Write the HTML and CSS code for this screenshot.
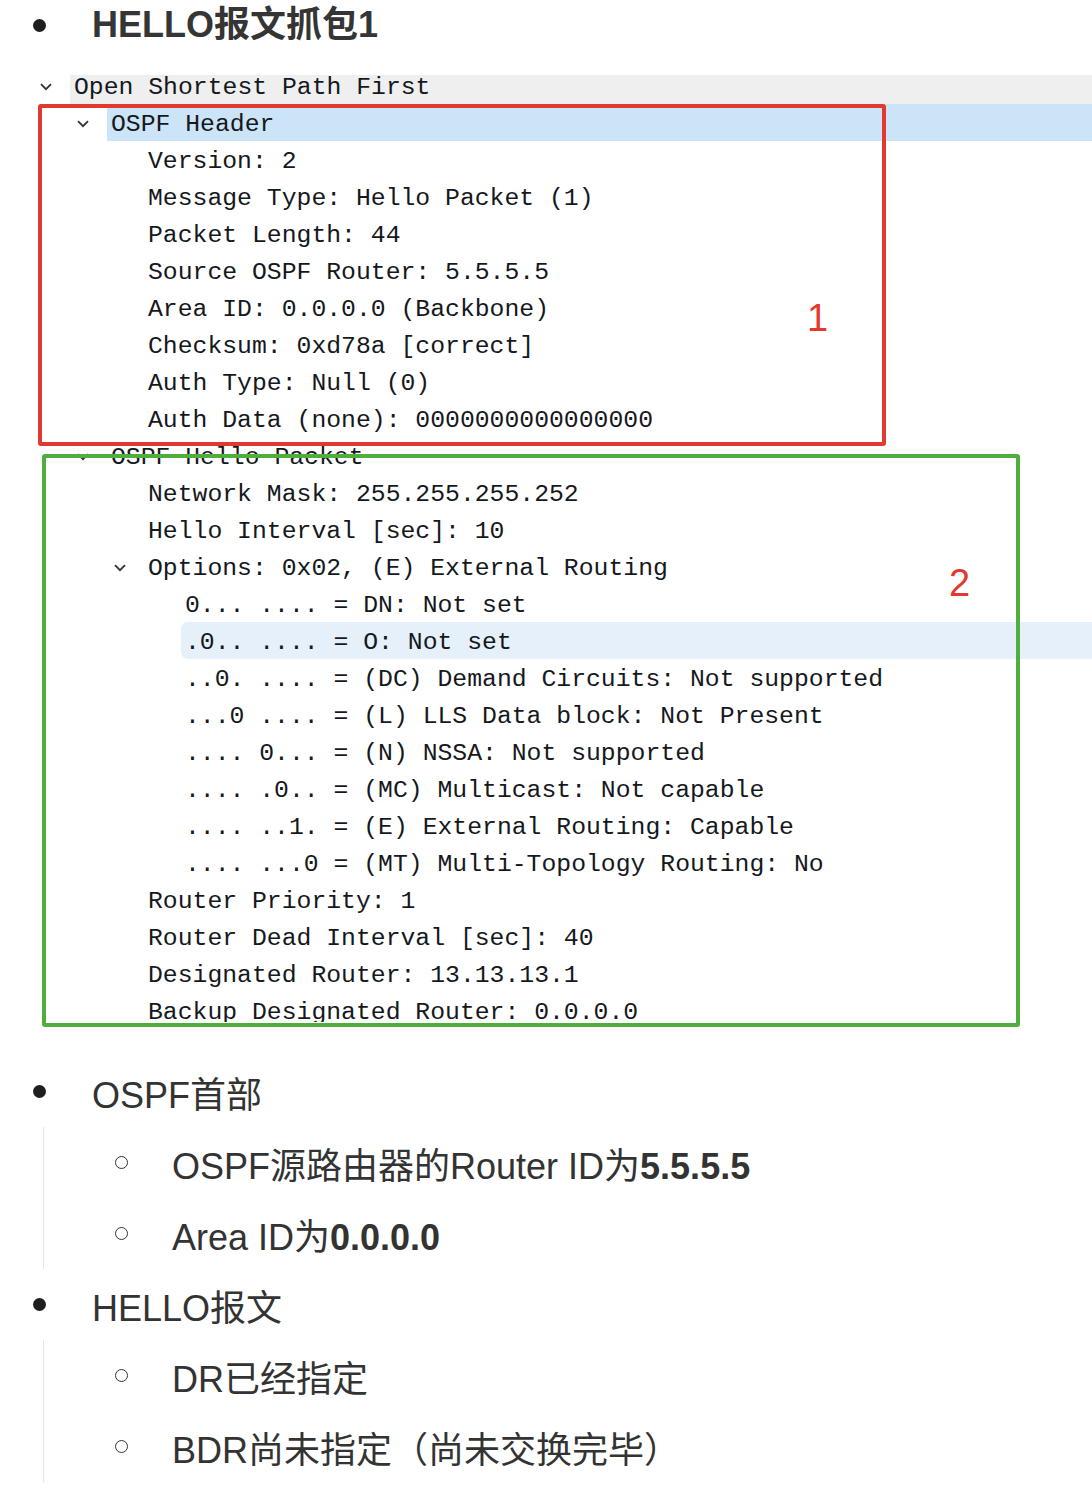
FILE: index.html
```html
<!DOCTYPE html>
<html lang="zh-CN">
<head>
<meta charset="utf-8">
<title>HELLO报文抓包1</title>
<link rel="stylesheet" href="styles.css">
</head>
<body>
<div class="h1row"><span class="dot"></span><span class="h1text">HELLO报文抓包1</span></div>

<div class="capture">
  <div class="panel">
    <div class="row l0 first"><span class="tg"><svg width="12" height="8" viewBox="0 0 12 8"><path d="M1 1.2 L6 6.2 L11 1.2" fill="none" stroke="#333" stroke-width="1.8"/></svg></span><span class="label grey">Open Shortest Path First</span></div>
    <div class="row l1"><span class="tg"><svg width="12" height="8" viewBox="0 0 12 8"><path d="M1 1.2 L6 6.2 L11 1.2" fill="none" stroke="#333" stroke-width="1.8"/></svg></span><span class="label blue">OSPF Header</span></div>
    <div class="row l2"><span class="tg"></span><span class="label">Version: 2</span></div>
    <div class="row l2"><span class="tg"></span><span class="label">Message Type: Hello Packet (1)</span></div>
    <div class="row l2"><span class="tg"></span><span class="label">Packet Length: 44</span></div>
    <div class="row l2"><span class="tg"></span><span class="label">Source OSPF Router: 5.5.5.5</span></div>
    <div class="row l2"><span class="tg"></span><span class="label">Area ID: 0.0.0.0 (Backbone)</span></div>
    <div class="row l2"><span class="tg"></span><span class="label">Checksum: 0xd78a [correct]</span></div>
    <div class="row l2"><span class="tg"></span><span class="label">Auth Type: Null (0)</span></div>
    <div class="row l2"><span class="tg"></span><span class="label">Auth Data (none): 0000000000000000</span></div>
    <div class="row l1"><span class="tg"><svg width="12" height="8" viewBox="0 0 12 8"><path d="M1 1.2 L6 6.2 L11 1.2" fill="none" stroke="#333" stroke-width="1.8"/></svg></span><span class="label">OSPF Hello Packet</span></div>
    <div class="row l2"><span class="tg"></span><span class="label">Network Mask: 255.255.255.252</span></div>
    <div class="row l2"><span class="tg"></span><span class="label">Hello Interval [sec]: 10</span></div>
    <div class="row l2"><span class="tg"><svg width="12" height="8" viewBox="0 0 12 8"><path d="M1 1.2 L6 6.2 L11 1.2" fill="none" stroke="#333" stroke-width="1.8"/></svg></span><span class="label">Options: 0x02, (E) External Routing</span></div>
    <div class="row l3"><span class="tg"></span><span class="label">0... .... = DN: Not set</span></div>
    <div class="row l3"><span class="tg"></span><span class="label sel">.0.. .... = O: Not set</span></div>
    <div class="row l3"><span class="tg"></span><span class="label">..0. .... = (DC) Demand Circuits: Not supported</span></div>
    <div class="row l3"><span class="tg"></span><span class="label">...0 .... = (L) LLS Data block: Not Present</span></div>
    <div class="row l3"><span class="tg"></span><span class="label">.... 0... = (N) NSSA: Not supported</span></div>
    <div class="row l3"><span class="tg"></span><span class="label">.... .0.. = (MC) Multicast: Not capable</span></div>
    <div class="row l3"><span class="tg"></span><span class="label">.... ..1. = (E) External Routing: Capable</span></div>
    <div class="row l3"><span class="tg"></span><span class="label">.... ...0 = (MT) Multi-Topology Routing: No</span></div>
    <div class="row l2"><span class="tg"></span><span class="label">Router Priority: 1</span></div>
    <div class="row l2"><span class="tg"></span><span class="label">Router Dead Interval [sec]: 40</span></div>
    <div class="row l2"><span class="tg"></span><span class="label">Designated Router: 13.13.13.1</span></div>
    <div class="row l2"><span class="tg"></span><span class="label">Backup Designated Router: 0.0.0.0</span></div>
  </div>
  <div class="box red"></div>
  <div class="box green"></div>
  <span class="mark m1">1</span>
  <span class="mark m2">2</span>
</div>

<div class="notes">
  <div class="item"><span class="dot"></span><span class="txt">OSPF首部</span></div>
  <div class="sub">
    <div class="item"><span class="ring"></span><span class="txt">OSPF源路由器的Router ID为<b>5.5.5.5</b></span></div>
    <div class="item"><span class="ring"></span><span class="txt">Area ID为<b>0.0.0.0</b></span></div>
  </div>
  <div class="item"><span class="dot"></span><span class="txt">HELLO报文</span></div>
  <div class="sub">
    <div class="item"><span class="ring"></span><span class="txt">DR已经指定</span></div>
    <div class="item"><span class="ring"></span><span class="txt">BDR尚未指定（尚未交换完毕）</span></div>
  </div>
</div>
</body>
</html>
```

FILE: styles.css
```css
html, body {
  margin: 0;
  padding: 0;
  background: #ffffff;
}

body {
  width: 1092px;
  font-family: "Liberation Sans", "Noto Sans CJK SC", sans-serif;
  color: #333333;
}

.h1row {
  display: flex;
  align-items: center;
  height: 50px;
}

.dot {
  width: 13px;
  height: 13px;
  border-radius: 50%;
  background: #1f1f1f;
  margin-left: 33px;
  flex: none;
}

.h1text {
  margin-left: 46px;
  font-size: 36px;
  font-weight: bold;
  line-height: 50px;
  color: #353535;
}

/* capture panel */
.capture {
  position: relative;
  margin-top: 25px;
}

.panel {
  height: 947px;
  overflow: hidden;
  font-family: "Liberation Mono", "DejaVu Sans Mono", monospace;
  font-size: 24.75px;
  color: #15181d;
}

.row {
  display: flex;
  align-items: stretch;
  height: 37px;
  white-space: pre;
}

.row.first {
  margin-top: -8px;
}

.l0 { padding-left: 40px; }
.l1 { padding-left: 77px; }
.l2 { padding-left: 114px; }
.l3 { padding-left: 151px; }

.tg {
  width: 30px;
  flex: none;
  display: flex;
  align-items: center;
}

.tg svg {
  display: block;
  margin-top: 2px;
}

.label {
  flex: 1;
  padding-left: 4px;
  padding-top: 4px;
  line-height: 33px;
}

.grey { background: #efefef; }
.blue { background: #cce4f7; }
.sel {
  background: #e5f0fa;
  border-radius: 7px 0 0 7px;
}

.box {
  position: absolute;
  box-sizing: border-box;
  border-width: 4px;
  border-style: solid;
  border-radius: 3px;
}

.box.red {
  left: 38px;
  top: 29px;
  width: 848px;
  height: 342px;
  border-color: #e2392e;
}

.box.green {
  left: 42px;
  top: 379px;
  width: 978px;
  height: 573px;
  border-color: #50ae3c;
}

.mark {
  position: absolute;
  font-family: "Liberation Sans", sans-serif;
  font-size: 38px;
  line-height: 40px;
  color: #e2392e;
}

.m1 { left: 807px; top: 223px; }
.m2 { left: 949px; top: 488px; }

/* notes list */
.notes {
  margin-top: 34px;
  font-size: 36px;
  color: #333333;
}

.item {
  display: flex;
  align-items: center;
  height: 71px;
}

.item .txt {
  margin-left: 46px;
  white-space: nowrap;
}

.sub {
  margin-left: 43px;
  border-left: 1px solid #e6e6e6;
}

.sub .item {
  padding-left: 71px;
}

.ring {
  width: 11px;
  height: 11px;
  border: 1.5px solid #333333;
  border-radius: 50%;
  flex: none;
}

.sub .item .txt {
  margin-left: 44px;
}
```
